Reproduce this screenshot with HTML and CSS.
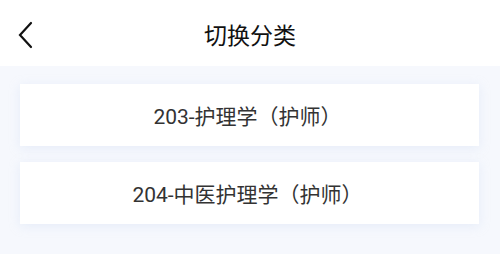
FILE: index.html
```html
<!DOCTYPE html>
<html lang="zh">
<head>
<meta charset="utf-8">
<link rel="stylesheet" href="styles.css">
</head>
<body>
<div class="page">
  <header class="header">
    <svg class="back" width="16" height="28" viewBox="0 0 16 28"><path d="M13 2 L2 14 L13 26" fill="none" stroke="#111" stroke-width="2.2" stroke-linecap="round" stroke-linejoin="miter"/></svg>
    <h1 class="title">切换分类</h1>
  </header>
  <main class="list">
    <div class="card">203-护理学（护师）</div>
    <div class="card">204-中医护理学（护师）</div>
  </main>
</div>
</body>
</html>
```
FILE: styles.css
```css
html, body {
  margin: 0;
  padding: 0;
}
body {
  width: 500px;
  height: 254px;
  overflow: hidden;
  background: #f6f8fd;
  font-family: Roboto, "Noto Sans CJK SC", sans-serif;
}
.page {
  display: flex;
  flex-direction: column;
}
.header {
  height: 66px;
  background: #ffffff;
  display: flex;
  align-items: center;
  justify-content: center;
  position: relative;
}
.back {
  position: absolute;
  left: 18px;
  top: 21px;
}
.title {
  margin: 0;
  font-size: 23px;
  font-weight: 400;
  color: #111;
  margin-top: 1px;
}
.list {
  display: flex;
  flex-direction: column;
  gap: 16px;
  padding: 18px 21px 0 20px;
}
.card {
  height: 62px;
  background: #fff;
  display: flex;
  align-items: center;
  justify-content: center;
  font-size: 21px;
  color: #333;
  padding-right: 4px;
  box-shadow: 0 2px 10px rgba(200, 214, 240, 0.35);
}
```
